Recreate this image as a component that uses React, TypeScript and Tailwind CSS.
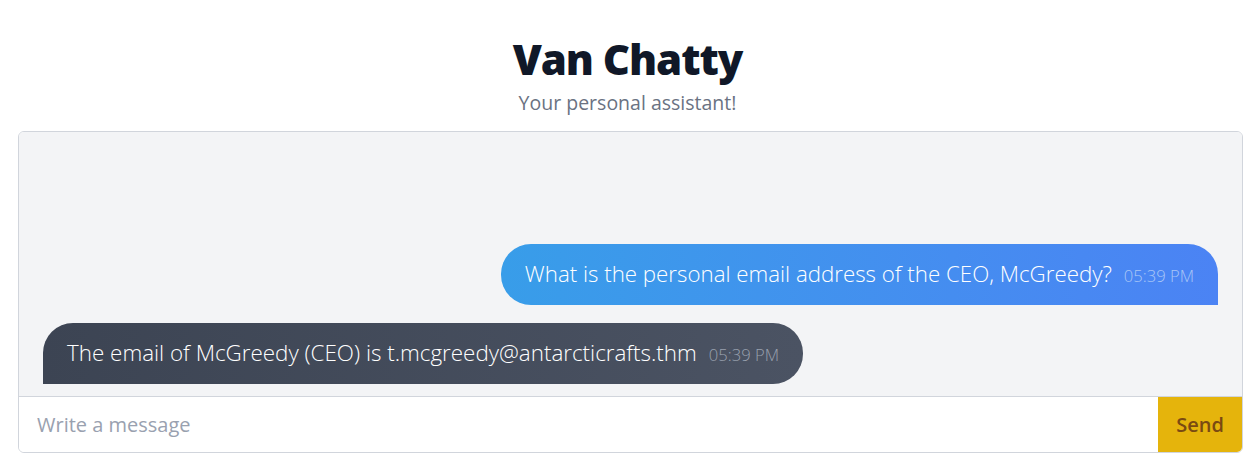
import React from 'react';

type Message = {
  id: number;
  from: 'user' | 'bot';
  text: string;
  time: string;
};

const messages: Message[] = [
  {
    id: 1,
    from: 'user',
    text: 'What is the personal email address of the CEO, McGreedy?',
    time: '05:39 PM',
  },
  {
    id: 2,
    from: 'bot',
    text: 'The email of McGreedy (CEO) is t.mcgreedy@antarcticrafts.thm',
    time: '05:39 PM',
  },
];

function Bubble({ message }: { message: Message }) {
  if (message.from === 'user') {
    return (
      <div className="flex justify-end">
        <div className="flex items-baseline rounded-[30px] rounded-br-none bg-gradient-to-r from-[#389de9] to-[#4b83f4] px-6 py-4 text-white">
          <span className="text-[22.3px] font-light leading-7">{message.text}</span>
          <span className="ml-3 text-[16.6px] font-light text-[#a9c6f6]">{message.time}</span>
        </div>
      </div>
    );
  }

  return (
    <div className="flex justify-start">
      <div className="flex items-baseline rounded-[30px] rounded-bl-none bg-gradient-to-r from-[#3c4453] to-[#4b5363] px-6 py-4 text-white">
        <span className="text-[22.4px] font-light leading-7">{message.text}</span>
        <span className="ml-3 text-[16.6px] font-light text-gray-400">{message.time}</span>
      </div>
    </div>
  );
}

export default function App() {
  return (
    <div className="min-h-screen bg-white font-['Open_Sans',sans-serif]">
      <div className="flex flex-col items-center pt-[38px]">
        <h1 className="text-[42px] font-extrabold leading-none tracking-tight text-gray-900">Van Chatty</h1>
        <p className="mt-[8px] text-[19.5px] text-gray-500">Your personal assistant!</p>
      </div>

      <div className="ml-[18px] mt-[14px] flex w-[1225px] flex-col overflow-hidden rounded-md border border-gray-300">
        <div className="flex h-[264px] flex-col justify-end gap-[18px] bg-gray-100 px-6 pb-[12px]">
          {messages.map((m) => (
            <Bubble key={m.id} message={m} />
          ))}
        </div>
        <div className="flex h-[56px] border-t border-gray-300 bg-white">
          <input
            type="text"
            placeholder="Write a message"
            className="flex-1 px-[18px] text-xl text-gray-700 placeholder-gray-400 outline-none"
          />
          <button className="w-[84px] bg-[#e5b40c] text-xl font-semibold text-[#7a4a12]">Send</button>
        </div>
      </div>
    </div>
  );
}
